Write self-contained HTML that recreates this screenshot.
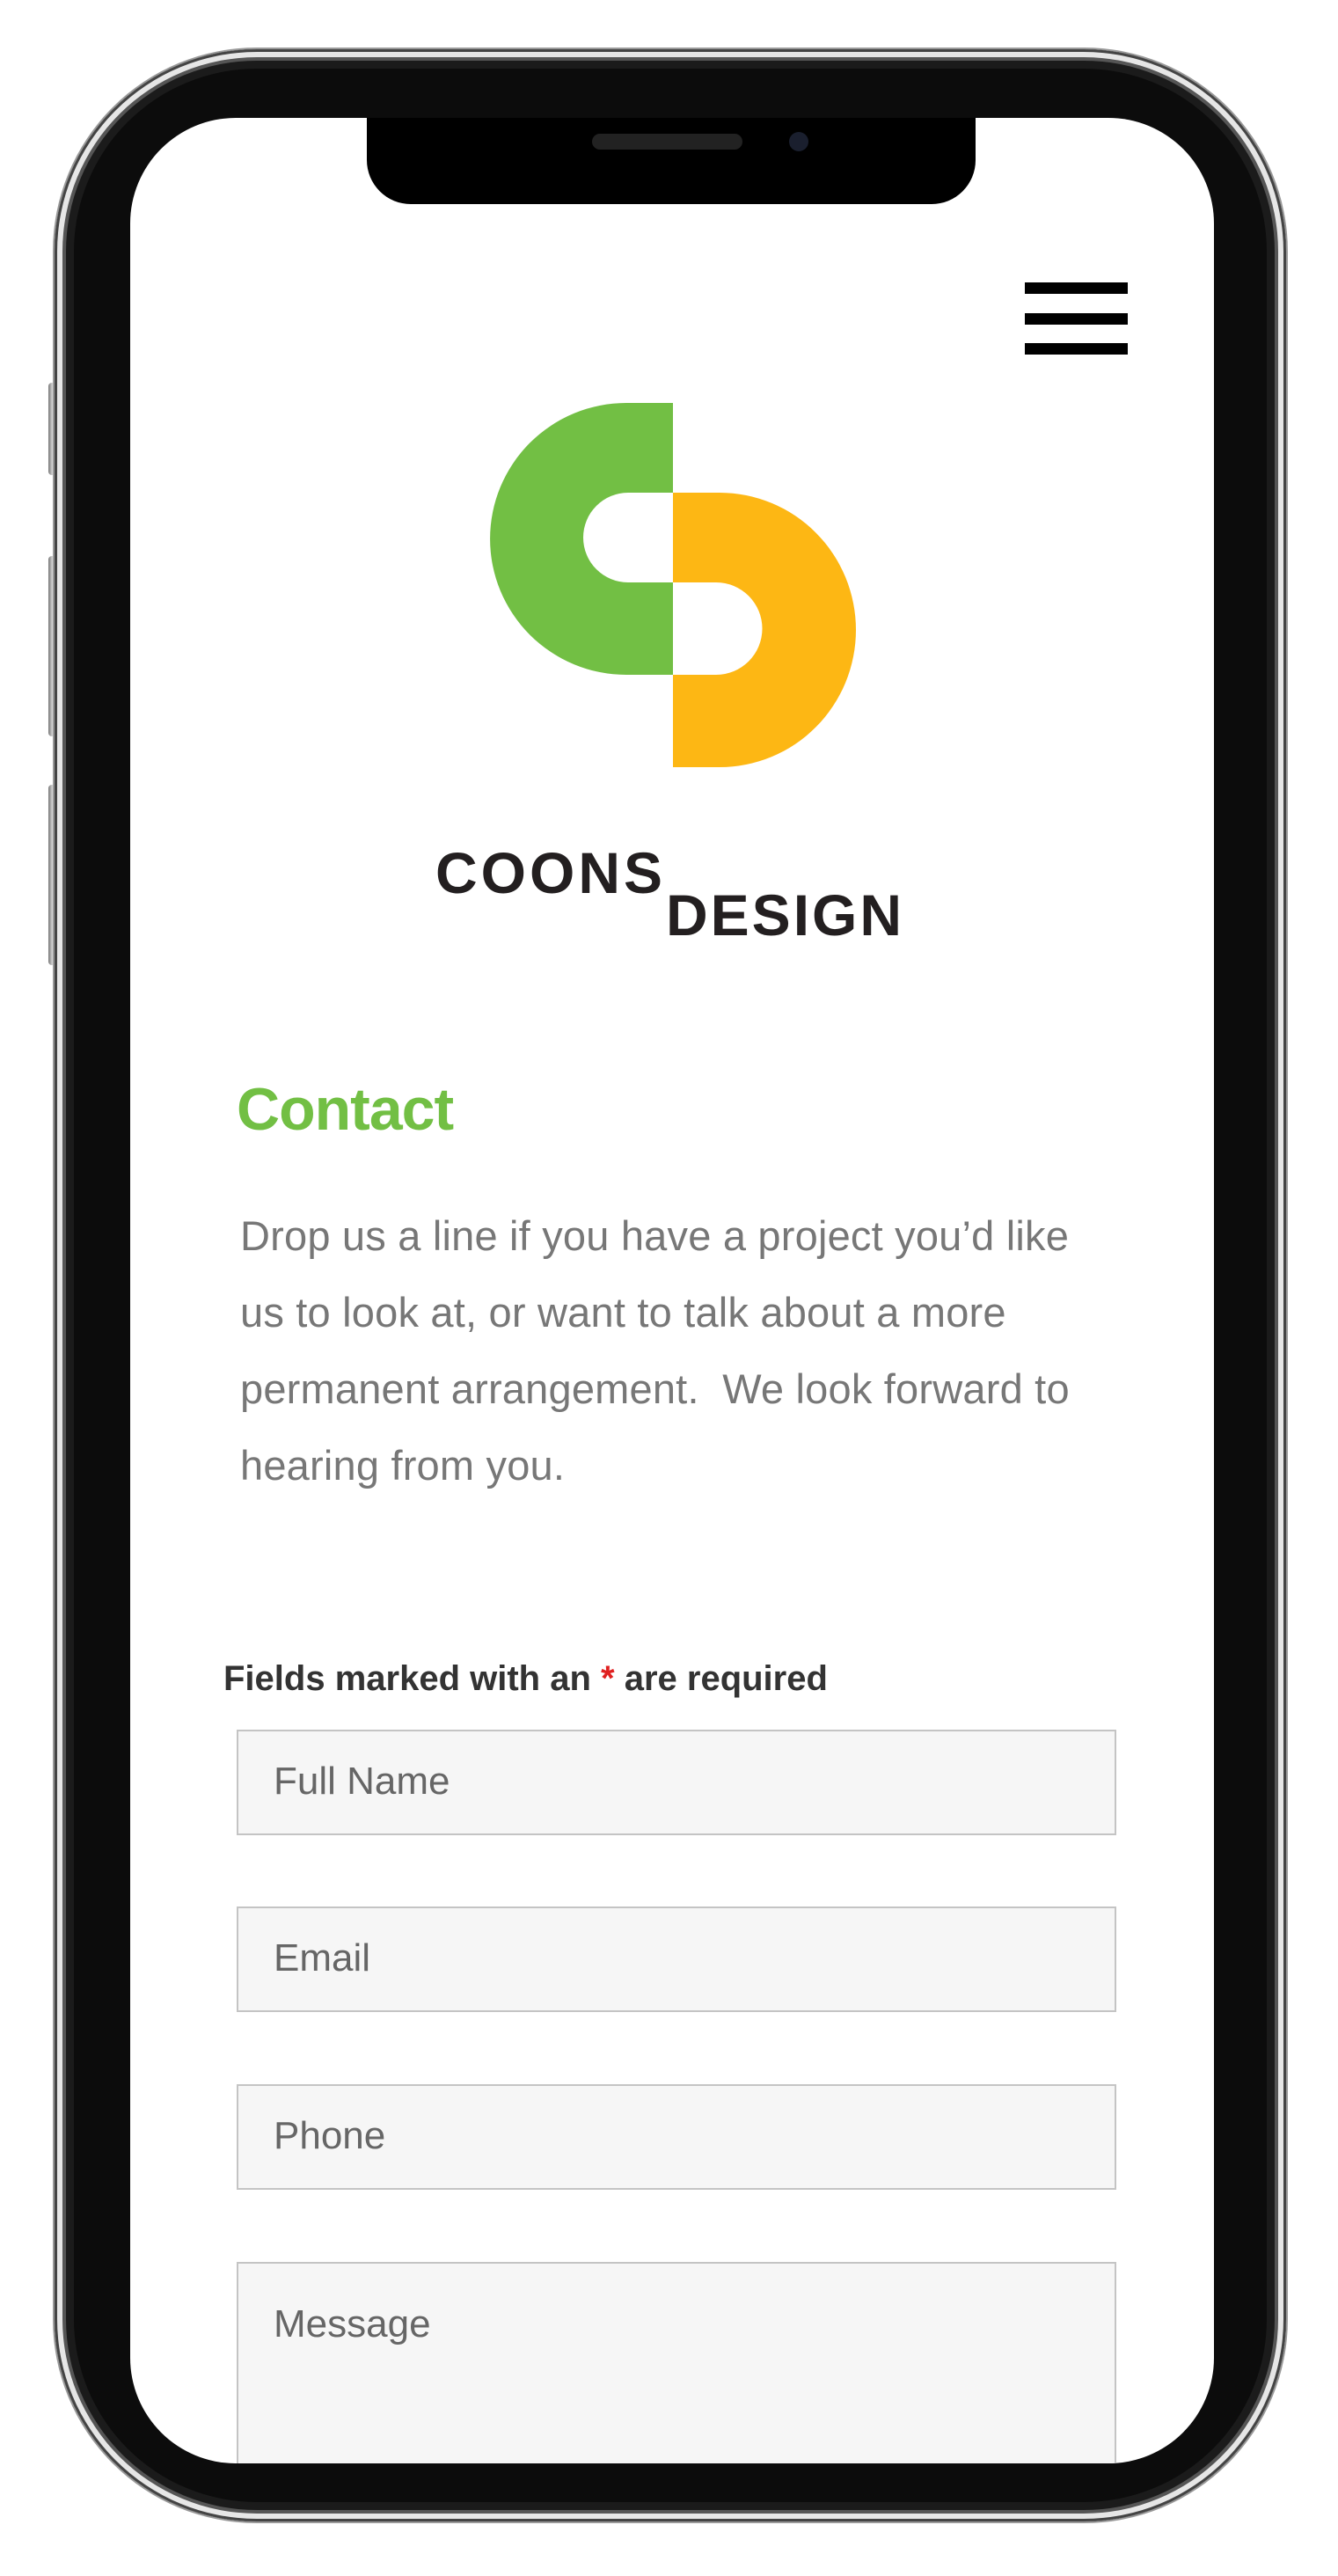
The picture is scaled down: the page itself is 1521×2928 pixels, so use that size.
<!DOCTYPE html>
<html><head><meta charset="utf-8"><style>
html,body{margin:0;padding:0;background:#fff;}
body{width:1521px;height:2928px;position:relative;overflow:hidden;font-family:"Liberation Sans",Arial,sans-serif;}
.btn{position:absolute;background:linear-gradient(90deg,#777,#ddd,#888);border-radius:4px;}
.phone{position:absolute;left:62px;top:56px;width:1400px;height:2810px;border-radius:230px;background:#0c0c0c;
box-shadow:inset 0 0 0 3px #444,inset 0 0 0 9px #e6e6e6,inset 0 0 0 13px #555,inset 0 0 0 22px #1b1b1b,0 0 0 2px #999;}
.screen{position:absolute;left:148px;top:134px;width:1232px;height:2666px;border-radius:120px;background:#fff;overflow:hidden;}
.notch{position:absolute;left:269px;top:-2px;width:692px;height:100px;background:#000;border-radius:0 0 50px 50px;}
.spk{position:absolute;left:256px;top:20px;width:171px;height:18px;border-radius:9px;background:#222;}
.cam{position:absolute;left:480px;top:18px;width:22px;height:22px;border-radius:50%;background:#1a1f2e;}
.bar{position:absolute;left:1017px;width:117px;height:13px;background:#000;}
.t{position:absolute;white-space:nowrap;}
.in{position:absolute;left:121px;width:1000px;height:120px;box-sizing:border-box;border:2px solid #c4c4c4;background:#f6f6f6;}
.in span{position:absolute;left:40px;top:32px;font-size:44px;color:#666;}
</style></head><body>
<div class="btn" style="left:55px;top:435px;width:10px;height:105px"></div>
<div class="btn" style="left:55px;top:632px;width:10px;height:205px"></div>
<div class="btn" style="left:55px;top:892px;width:10px;height:205px"></div>
<div class="btn" style="left:1451px;top:698px;width:10px;height:325px"></div>
<div class="phone"></div>
<div class="screen">
  <div class="notch"><div class="spk"></div><div class="cam"></div></div>
  <div class="bar" style="top:187px"></div>
  <div class="bar" style="top:222px"></div>
  <div class="bar" style="top:256px"></div>
  <svg style="position:absolute;left:-148px;top:-134px" width="1521" height="1200">
    <path d="M765 458V560H714A51 51 0 0 0 714 662H765V767H712A155 154.5 0 0 1 712 458Z" fill="#72bf44"/>
    <path d="M765 560H818A155 156 0 0 1 818 872H765V767H814A52.5 52.5 0 0 0 814 662H765Z" fill="#fdb714"/>
  </svg>
  <div class="t" style="left:347px;top:820px;font-size:66px;font-weight:bold;color:#231f20;letter-spacing:4px">COONS</div>
  <div class="t" style="left:609px;top:868px;font-size:66px;font-weight:bold;color:#231f20;letter-spacing:3px">DESIGN</div>
  <div class="t" style="left:121px;top:1088px;font-size:68px;font-weight:bold;color:#72bf44;letter-spacing:-1px">Contact</div>
  <div class="t" style="left:125px;top:1227px;font-size:47px;line-height:87px;color:#777;letter-spacing:0.2px">Drop us a line if you have a project you’d like<br>us to look at, or want to talk about a more<br>permanent arrangement.&nbsp; We look forward to<br>hearing from you.</div>
  <div class="t" style="left:106px;top:1752px;font-size:40px;font-weight:bold;color:#333;letter-spacing:0px">Fields marked with an <span style="color:#e02020">*</span> are required</div>
  <div class="in" style="top:1832px"><span>Full Name</span></div>
  <div class="in" style="top:2033px"><span>Email</span></div>
  <div class="in" style="top:2235px"><span>Phone</span></div>
  <div class="in" style="top:2437px;height:300px"><span style="top:44px">Message</span></div>
</div>
</body></html>
